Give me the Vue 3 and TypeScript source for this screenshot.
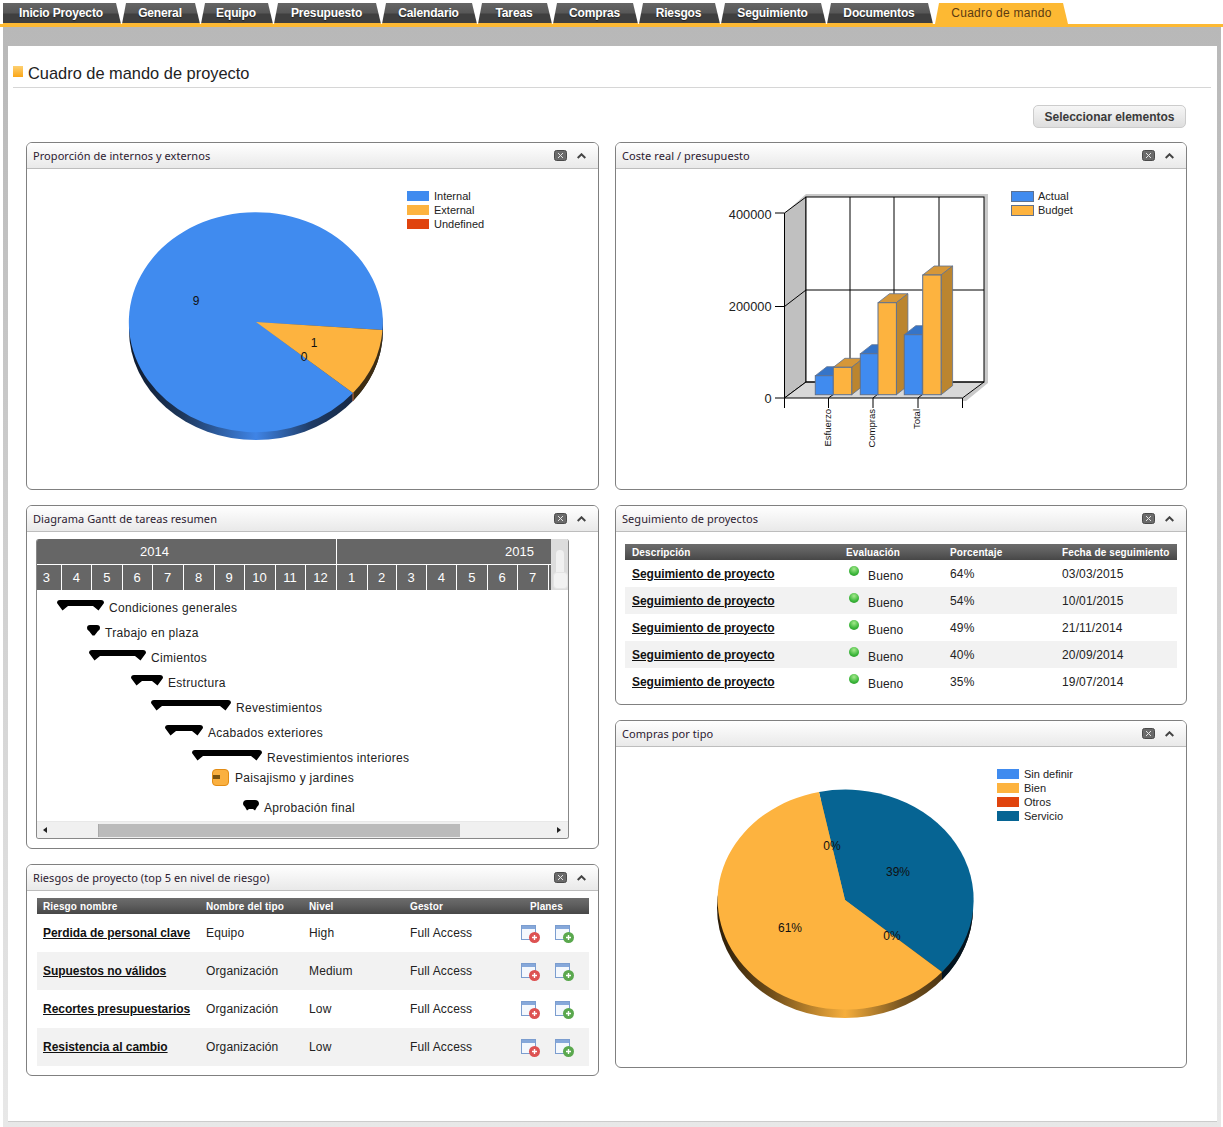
<template>
  <div class="page">
    <nav class="tabs">
      <a v-for="(tab, i) in tabs" :key="tab.label" class="tab" :class="{ first: i === 0, active: tab.label === 'Cuadro de mando' }" :style="{ width: tab.w + 'px' }">{{ tab.label }}</a>
    </nav>
    <div class="shell">
      <main class="content">
        <header class="heading">
          <span class="heading-mark"></span>
          <h1>Cuadro de mando de proyecto</h1>
        </header>
        <div class="actions">
          <button class="select-btn">Seleccionar elementos</button>
        </div>

        <div class="columns">
          <div class="column left">
            <section class="panel">
              <div class="panel-head">
                <span class="panel-title">Proporción de internos y externos</span>
                <svg class="icon-close" width="13" height="11" viewBox="0 0 13 11"><rect x=".5" y=".5" width="12" height="10" rx="2" fill="#6a6a6a" stroke="#4a4a4a" /><path d="M4 3l5 5M9 3l-5 5" stroke="#e4e4e4" fill="none" /></svg>
                <svg class="icon-chevron" width="9" height="6" viewBox="0 0 9 6"><path d="M.7 5L4.5 1.3 8.3 5" fill="none" stroke="#444" stroke-width="2" /></svg>
              </div>
              <svg class="chart" width="571" height="320" viewBox="27 169 571 320">
                <defs>
                  <linearGradient id="blueSide" x1="0" x2="1" y1="0" y2="0">
                    <stop offset="0" stop-color="#0e1a2e" />
                    <stop offset=".2" stop-color="#1c3558" />
                    <stop offset=".5" stop-color="#3f84e6" />
                    <stop offset=".72" stop-color="#1f3b64" />
                    <stop offset="1" stop-color="#0e1a2e" />
                  </linearGradient>
                </defs>
                <ellipse cx="256" cy="330" rx="127" ry="110" fill="url(#blueSide)" />
                <path d="M353 393A127 110 0 0 0 382.5 330V338A127 110 0 0 1 353 401Z" fill="#3e2d12" />
                <path d="M353 393V401" stroke="#c9704a" />
                <path d="M256 322L382.5 330A127 110 0 1 0 353 393Z" fill="#408bef" />
                <path d="M256 322L382.5 330A127 110 0 0 1 353 393Z" fill="#fdb33f" />
                <text x="196" y="305" class="chart-label">9</text>
                <text x="314" y="347" class="chart-label">1</text>
                <text x="304" y="361" class="chart-label">0</text>
                <g v-for="(item, i) in legendOne" :key="item.label">
                  <rect x="407" :y="191 + i * 14" width="22" height="10" :fill="item.color" />
                  <text x="434" :y="200 + i * 14" class="legend-text">{{ item.label }}</text>
                </g>
              </svg>
            </section>

            <section class="panel">
              <div class="panel-head">
                <span class="panel-title">Diagrama Gantt de tareas resumen</span>
                <svg class="icon-close" width="13" height="11" viewBox="0 0 13 11"><rect x=".5" y=".5" width="12" height="10" rx="2" fill="#6a6a6a" stroke="#4a4a4a" /><path d="M4 3l5 5M9 3l-5 5" stroke="#e4e4e4" fill="none" /></svg>
                <svg class="icon-chevron" width="9" height="6" viewBox="0 0 9 6"><path d="M.7 5L4.5 1.3 8.3 5" fill="none" stroke="#444" stroke-width="2" /></svg>
              </div>
              <div class="gantt-body">
                <div class="gantt">
                  <div class="gantt-head">
                    <div class="years">
                      <span class="year y2014">2014</span>
                      <span class="year y2015">2015</span>
                    </div>
                    <div class="months">
                      <span v-for="(m, i) in months" :key="i" class="month" :style="{ width: m.w + 'px' }">{{ m.n }}</span>
                    </div>
                  </div>
                  <div class="v-scroll">
                    <span class="v-track"></span>
                    <span class="v-thumb"></span>
                  </div>
                  <div class="gantt-canvas">
                    <div v-for="t in tasks" :key="t.label">
                      <svg v-if="t.kind !== 'task'" class="gantt-bar" :width="t.w" height="11" :viewBox="`0 0 ${t.w} 11`" :style="{ left: t.x - 37 + 'px', top: t.y - 590 + 'px' }">
                        <path :d="barPath(t.w, t.kind)" fill="#000" />
                      </svg>
                      <span v-else class="gantt-task" :style="{ left: t.x - 37 + 'px', top: t.y - 590 + 'px' }"><i></i></span>
                      <span class="gantt-label" :style="{ left: t.lx - 37 + 'px', top: t.ly - 590 + 'px' }">{{ t.label }}</span>
                    </div>
                  </div>
                  <div class="h-scroll">
                    <span class="h-arrow back"></span>
                    <div class="h-track"><span class="h-thumb"></span></div>
                    <span class="h-arrow next"></span>
                  </div>
                </div>
              </div>
            </section>

            <section class="panel">
              <div class="panel-head">
                <span class="panel-title">Riesgos de proyecto (top 5 en nivel de riesgo)</span>
                <svg class="icon-close" width="13" height="11" viewBox="0 0 13 11"><rect x=".5" y=".5" width="12" height="10" rx="2" fill="#6a6a6a" stroke="#4a4a4a" /><path d="M4 3l5 5M9 3l-5 5" stroke="#e4e4e4" fill="none" /></svg>
                <svg class="icon-chevron" width="9" height="6" viewBox="0 0 9 6"><path d="M.7 5L4.5 1.3 8.3 5" fill="none" stroke="#444" stroke-width="2" /></svg>
              </div>
              <div class="risk-body">
                <div class="risk-row table-head">
                  <span>Riesgo nombre</span>
                  <span>Nombre del tipo</span>
                  <span>Nivel</span>
                  <span>Gestor</span>
                  <span class="planes-head">Planes</span>
                </div>
                <div v-for="(r, i) in risks" :key="r.name" class="risk-row row" :class="{ alt: i % 2 === 1 }">
                  <a class="link">{{ r.name }}</a>
                  <span>{{ r.type }}</span>
                  <span>{{ r.level }}</span>
                  <span>Full Access</span>
                  <span class="plan-icons">
                    <svg v-for="c in planColors" :key="c" width="20" height="19" viewBox="0 0 20 19">
                      <rect x=".5" y=".5" width="14" height="14" fill="#f4f8fd" stroke="#7b9dcf" />
                      <rect x="1" y="1" width="13" height="3" fill="#86a8da" />
                      <circle cx="13.5" cy="12.5" r="5.5" :fill="c" />
                      <path d="M11 12.5h5M13.5 10v5" stroke="#fff" stroke-width="1.4" />
                    </svg>
                  </span>
                </div>
              </div>
            </section>
          </div>

          <div class="column right">
            <section class="panel">
              <div class="panel-head">
                <span class="panel-title">Coste real / presupuesto</span>
                <svg class="icon-close" width="13" height="11" viewBox="0 0 13 11"><rect x=".5" y=".5" width="12" height="10" rx="2" fill="#6a6a6a" stroke="#4a4a4a" /><path d="M4 3l5 5M9 3l-5 5" stroke="#e4e4e4" fill="none" /></svg>
                <svg class="icon-chevron" width="9" height="6" viewBox="0 0 9 6"><path d="M.7 5L4.5 1.3 8.3 5" fill="none" stroke="#444" stroke-width="2" /></svg>
              </div>
              <svg class="chart" width="570" height="320" viewBox="616 169 570 320">
                <path d="M786 212L806 194H988V383L966 401H963V398L984 382V197H806Z" fill="#c9c9c9" />
                <path d="M784.5 213L806 197V382L784.5 398Z" fill="#c0c0c0" stroke="#000" stroke-width="1" />
                <path d="M784.5 398L806 382H984L962.5 398Z" fill="#d8d8d8" />
                <rect x="806" y="197" width="178" height="185" fill="#fff" stroke="#000" />
                <path d="M850 197V382M894 197V382M939 197V382M806 290H984M784.5 306.5L806 290" stroke="#000" fill="none" />
                <path d="M784.5 398L806 382H984L962.5 398H784.5" stroke="#000" fill="none" />
                <path d="M775 213H784.5M775 306.5H784.5M775 398H784.5V408M828.5 398V408M828.5 398L834 394M873 398V408M873 398L878 394M918 398V408M918 398L923 394M962.5 398V408" stroke="#000" fill="none" />
                <g v-for="b in bars" :key="b.x">
                  <path :d="`M${b.x} ${b.top}l11.5 -9h${b.w}l-11.5 9Z`" :fill="b.topColor" stroke="#5d7190" stroke-width=".8" />
                  <path :d="`M${b.x + b.w} ${b.top}l11.5 -9V385.7l-11.5 9Z`" :fill="b.sideColor" stroke="#5d7190" stroke-width=".8" />
                  <rect :x="b.x" :y="b.top" :width="b.w" :height="394.7 - b.top" :fill="b.color" stroke="#5d7190" />
                </g>
                <text x="771.5" y="218.5" class="axis-text">400000</text>
                <text x="771.5" y="311" class="axis-text">200000</text>
                <text x="771.5" y="403" class="axis-text">0</text>
                <text transform="translate(831 409) rotate(-90)" class="cat-text">Esfuerzo</text>
                <text transform="translate(875 409) rotate(-90)" class="cat-text">Compras</text>
                <text transform="translate(920 409) rotate(-90)" class="cat-text">Total</text>
                <g v-for="(item, i) in legendTwo" :key="item.label">
                  <rect x="1011.5" :y="191.5 + i * 14" width="22" height="10" :fill="item.color" stroke="#5d7190" />
                  <text x="1038" :y="200 + i * 14" class="legend-text">{{ item.label }}</text>
                </g>
              </svg>
            </section>

            <section class="panel">
              <div class="panel-head">
                <span class="panel-title">Seguimiento de proyectos</span>
                <svg class="icon-close" width="13" height="11" viewBox="0 0 13 11"><rect x=".5" y=".5" width="12" height="10" rx="2" fill="#6a6a6a" stroke="#4a4a4a" /><path d="M4 3l5 5M9 3l-5 5" stroke="#e4e4e4" fill="none" /></svg>
                <svg class="icon-chevron" width="9" height="6" viewBox="0 0 9 6"><path d="M.7 5L4.5 1.3 8.3 5" fill="none" stroke="#444" stroke-width="2" /></svg>
              </div>
              <div class="track-body">
                <div class="track-row table-head">
                  <span>Descripción</span>
                  <span>Evaluación</span>
                  <span>Porcentaje</span>
                  <span>Fecha de seguimiento</span>
                </div>
                <div v-for="(t, i) in tracking" :key="t.date" class="track-row row" :class="{ alt: i % 2 === 1 }">
                  <a class="link">Seguimiento de proyecto</a>
                  <span class="evaluation"><i class="dot"></i><span class="eval-text">Bueno</span></span>
                  <span>{{ t.pct }}</span>
                  <span>{{ t.date }}</span>
                </div>
              </div>
            </section>

            <section class="panel">
              <div class="panel-head">
                <span class="panel-title">Compras por tipo</span>
                <svg class="icon-close" width="13" height="11" viewBox="0 0 13 11"><rect x=".5" y=".5" width="12" height="10" rx="2" fill="#6a6a6a" stroke="#4a4a4a" /><path d="M4 3l5 5M9 3l-5 5" stroke="#e4e4e4" fill="none" /></svg>
                <svg class="icon-chevron" width="9" height="6" viewBox="0 0 9 6"><path d="M.7 5L4.5 1.3 8.3 5" fill="none" stroke="#444" stroke-width="2" /></svg>
              </div>
              <svg class="chart" width="570" height="320" viewBox="616 747 570 320">
                <defs>
                  <linearGradient id="orangeSide" x1="0" x2="1" y1="0" y2="0">
                    <stop offset="0" stop-color="#2a1c08" />
                    <stop offset=".2" stop-color="#6b4a18" />
                    <stop offset=".5" stop-color="#f6ae3c" />
                    <stop offset=".72" stop-color="#7a5620" />
                    <stop offset="1" stop-color="#2a1c08" />
                  </linearGradient>
                </defs>
                <ellipse cx="845" cy="908" rx="128" ry="110" fill="url(#orangeSide)" />
                <path d="M942 972A128 110 0 0 0 973 900V908A128 110 0 0 1 942 980Z" fill="#04141f" />
                <path d="M845 900L819 792A128 110 0 0 1 942 972Z" fill="#066493" />
                <path d="M845 900L942 972A128 110 0 1 1 819 792Z" fill="#fdb33f" />
                <text x="832" y="850" class="chart-label">0%</text>
                <text x="898" y="876" class="chart-label">39%</text>
                <text x="790" y="932" class="chart-label">61%</text>
                <text x="892" y="940" class="chart-label">0%</text>
                <g v-for="(item, i) in legendThree" :key="item.label">
                  <rect x="997" :y="769 + i * 14" width="22" height="10" :fill="item.color" />
                  <text x="1024" :y="778 + i * 14" class="legend-text">{{ item.label }}</text>
                </g>
              </svg>
            </section>
          </div>
        </div>
      </main>
    </div>
  </div>
</template>

<script setup lang="ts">
const tabs = [
  { label: 'Inicio Proyecto', w: 118 },
  { label: 'General', w: 78 },
  { label: 'Equipo', w: 72 },
  { label: 'Presupuesto', w: 107 },
  { label: 'Calendario', w: 95 },
  { label: 'Tareas', w: 74 },
  { label: 'Compras', w: 85 },
  { label: 'Riesgos', w: 81 },
  { label: 'Seguimiento', w: 105 },
  { label: 'Documentos', w: 106 },
  { label: 'Cuadro de mando', w: 133 }
]

const legendOne = [
  { label: 'Internal', color: '#408bef' },
  { label: 'External', color: '#fdb33f' },
  { label: 'Undefined', color: '#e0440e' }
]
const legendTwo = [
  { label: 'Actual', color: '#408bef' },
  { label: 'Budget', color: '#fdb33f' }
]
const legendThree = [
  { label: 'Sin definir', color: '#408bef' },
  { label: 'Bien', color: '#fdb33f' },
  { label: 'Otros', color: '#e0440e' },
  { label: 'Servicio', color: '#066493' }
]

const blue = { color: '#408bef', topColor: '#3574c8', sideColor: '#2f66b0', w: 18 }
const orange = { color: '#fdb33f', topColor: '#d69738', sideColor: '#bb852f', w: 18.4 }
const bars = [
  { x: 815.3, top: 375.7, ...blue },
  { x: 833.3, top: 367.3, ...orange },
  { x: 860.3, top: 353.7, ...blue },
  { x: 878, top: 302.7, ...orange },
  { x: 904.3, top: 334.7, ...blue },
  { x: 922.7, top: 275, ...orange }
]

const months = [
  { n: 3, w: 24.5 }, { n: 4, w: 30.5 }, { n: 5, w: 30.5 }, { n: 6, w: 30 }, { n: 7, w: 31 }, { n: 8, w: 31 },
  { n: 9, w: 30 }, { n: 10, w: 31 }, { n: 11, w: 30 }, { n: 12, w: 31 }, { n: 1, w: 31 }, { n: 2, w: 29 },
  { n: 3, w: 30 }, { n: 4, w: 30.5 }, { n: 5, w: 30.5 }, { n: 6, w: 30 }, { n: 7, w: 31 }
]

const tasks = [
  { label: 'Condiciones generales', kind: 'summary', x: 57, w: 47, y: 600, lx: 109, ly: 601 },
  { label: 'Trabajo en plaza', kind: 'small', x: 87, w: 13, y: 625, lx: 105, ly: 626 },
  { label: 'Cimientos', kind: 'summary', x: 89, w: 57, y: 650, lx: 151, ly: 651 },
  { label: 'Estructura', kind: 'summary', x: 131, w: 32, y: 675, lx: 168, ly: 676 },
  { label: 'Revestimientos', kind: 'summary', x: 151, w: 80, y: 700, lx: 236, ly: 701 },
  { label: 'Acabados exteriores', kind: 'summary', x: 165, w: 38, y: 725, lx: 208, ly: 726 },
  { label: 'Revestimientos interiores', kind: 'summary', x: 192, w: 70, y: 750, lx: 267, ly: 751 },
  { label: 'Paisajismo y jardines', kind: 'task', x: 212, w: 17, y: 769, lx: 235, ly: 771 },
  { label: 'Aprobación final', kind: 'milestone', x: 243, w: 16, y: 800, lx: 264, ly: 801 }
]

function barPath(w: number, kind: string): string {
  if (kind === 'small') return `M3 0H${w - 3}Q${w} 0 ${w} 3Q${w} 5 ${w - 2} 6L${w / 2 + 1} 10.5H${w / 2 - 1}L2 6Q0 5 0 3Q0 0 3 0Z`
  if (kind === 'milestone') return `M4 0H${w - 4}Q${w} 0 ${w} 4Q${w} 5 ${w - 2} 7L${w - 4} 10.5L${w - 6} 9H6L4 10.5L2 7Q0 5 0 4Q0 0 4 0Z`
  return `M3 0H${w - 3}Q${w} 0 ${w} 3L${w - 5.5} 10.5L${w - 11} 6H11L5.5 10.5L0 3Q0 0 3 0Z`
}

const risks = [
  { name: 'Perdida de personal clave', type: 'Equipo', level: 'High' },
  { name: 'Supuestos no válidos', type: 'Organización', level: 'Medium' },
  { name: 'Recortes presupuestarios', type: 'Organización', level: 'Low' },
  { name: 'Resistencia al cambio', type: 'Organización', level: 'Low' }
]
const planColors = ['#dd5252', '#5aa84e']

const tracking = [
  { pct: '64%', date: '03/03/2015' },
  { pct: '54%', date: '10/01/2015' },
  { pct: '49%', date: '21/11/2014' },
  { pct: '40%', date: '20/09/2014' },
  { pct: '35%', date: '19/07/2014' }
]
</script>

<style>
html, body {
  margin: 0;
  background: #fff;
}
</style>

<style scoped>
.page {
  width: 1223px;
  height: 1127px;
  overflow: hidden;
  font-family: "Liberation Sans", Arial, sans-serif;
  font-size: 12px;
  color: #222;
}

.tabs {
  display: flex;
  gap: 1px;
  height: 21px;
  padding: 3px 0 0 3px;
  border-bottom: 3px solid #fdb933;
}
.tab {
  box-sizing: border-box;
  flex: none;
  height: 21px;
  line-height: 20px;
  padding-right: 2px;
  text-align: center;
  font-weight: bold;
  letter-spacing: -.14px;
  color: #fff;
  text-shadow: 0 1px 1px rgba(0, 0, 0, .5);
  background: linear-gradient(#666 0, #575757 48%, #3f3f3f 52%, #3f3f3f 95%, #fdb933 95%);
  clip-path: polygon(4px 0, calc(100% - 5px) 0, 100% 100%, 0 100%);
  white-space: nowrap;
}
.tab.first {
  clip-path: polygon(0 0, calc(100% - 5px) 0, 100% 100%, 0 100%);
}
.tab.active {
  font-weight: normal;
  letter-spacing: .3px;
  color: #5b3a12;
  text-shadow: none;
  background: #fdb933;
  padding: 0;
  margin-left: 1px;
}

.shell {
  margin-left: 3px;
  width: 1209px;
  padding: 19px 4px 5px 5px;
  background: linear-gradient(#b8b8b8, #e8e8e8);
}
.content {
  box-sizing: border-box;
  height: 1076px;
  background: #fff;
  border-bottom: 1px solid #ccc;
}

.heading {
  display: flex;
  align-items: center;
  height: 42px;
  margin: 0 6px 0 5px;
  padding-top: 13px;
  box-sizing: border-box;
  border-bottom: 1px solid #d6d6d6;
}
.heading-mark {
  width: 10px;
  height: 11px;
  margin: 0 5px 4px 0;
  background: linear-gradient(#fdd071, #fba617);
}
h1 {
  margin: 0;
  font-size: 16.4px;
  font-weight: normal;
  color: #222;
}

.actions {
  display: flex;
  justify-content: flex-end;
  margin: 17px 31px 14px 0;
}
.select-btn {
  width: 153px;
  height: 23px;
  padding: 0;
  font: bold 12px "Liberation Sans", Arial, sans-serif;
  color: #3a3a3a;
  background: linear-gradient(#f6f6f6, #dedede);
  border: 1px solid #ccc;
  border-radius: 5px;
}

.columns {
  display: flex;
  gap: 16px;
  padding-left: 18px;
}
.column {
  display: flex;
  flex-direction: column;
  gap: 15px;
}
.column.left {
  width: 573px;
}
.column.right {
  width: 572px;
}

.panel {
  border: 1px solid #808080;
  border-radius: 6px;
  overflow: hidden;
  background: #fff;
}
.panel-head {
  display: flex;
  align-items: center;
  height: 25px;
  padding: 0 12px 0 6px;
  background: linear-gradient(#fff, #e9e9e9);
  border-bottom: 1px solid #bdbdbd;
}
.panel-title {
  flex: 1;
  font-family: "Noto Sans", sans-serif;
  font-size: 11px;
  letter-spacing: .06px;
  color: #2c2030;
}
.icon-chevron {
  margin-left: 10px;
}
.chart {
  display: block;
}
.chart-label {
  font-size: 12px;
  text-anchor: middle;
  fill: #111;
}
.legend-text {
  font-size: 11px;
  fill: #222;
}
.axis-text {
  font-size: 12.8px;
  text-anchor: end;
  fill: #222;
}
.cat-text {
  font-size: 9.5px;
  text-anchor: end;
  fill: #111;
}

.gantt-body {
  padding: 7px 29px 9px 9px;
}
.gantt {
  position: relative;
  display: flex;
  flex-direction: column;
  height: 299px;
  border: solid #888;
  border-width: 0 1px 1px;
  border-radius: 3px;
  overflow: hidden;
}
.gantt-head {
  width: 514px;
  height: 51px;
  color: #fff;
  font-size: 13px;
  background: #666;
}
.years {
  display: flex;
  height: 25px;
  line-height: 25px;
  border-bottom: 1px solid #fff;
}
.year {
  box-sizing: border-box;
}
.y2014 {
  width: 300px;
  padding-left: 103px;
  border-right: 1px solid #fff;
}
.y2015 {
  padding-left: 168px;
}
.months {
  display: flex;
  height: 25px;
  line-height: 25px;
}
.month {
  box-sizing: border-box;
  text-align: center;
  border-right: 1px solid #fff;
  flex: none;
}
.month:first-child {
  padding-right: 5px;
}
.v-scroll {
  position: absolute;
  right: 0;
  top: 0;
  width: 17px;
  height: 51px;
  background: #dcdcdc;
}
.v-track {
  position: absolute;
  left: 5px;
  top: 11px;
  width: 8px;
  height: 24px;
  background: #f0f0f0;
  border-radius: 4px 4px 0 0;
}
.v-thumb {
  position: absolute;
  left: 2px;
  top: 33px;
  width: 13px;
  height: 15px;
  background: #f2f2f2;
  border: 1px solid #e4e4e4;
  border-radius: 4px;
  box-sizing: content-box;
}
.gantt-canvas {
  position: relative;
  flex: 1;
}
.gantt-bar {
  position: absolute;
  display: block;
}
.gantt-task {
  position: absolute;
  box-sizing: border-box;
  width: 17px;
  height: 17px;
  background: #fab040;
  border: 1px solid #e28c14;
  border-radius: 4px;
}
.gantt-task i {
  position: absolute;
  left: 0;
  top: 5px;
  width: 7px;
  height: 4px;
  background: #7c5410;
}
.gantt-label {
  position: absolute;
  white-space: nowrap;
  letter-spacing: .3px;
  line-height: 14px;
  color: #222;
}
.h-scroll {
  display: flex;
  align-items: center;
  height: 17px;
  background: #f0f0f0;
  border-top: 1px solid #e8e8e8;
  box-sizing: border-box;
}
.h-arrow {
  width: 0;
  height: 0;
  border: solid transparent;
  border-width: 3.5px 4px;
}
.h-arrow.back {
  margin: 0 7px 0 6px;
  border-left-width: 0;
  border-right-color: #222;
}
.h-arrow.next {
  margin: 0 7px 0 7px;
  border-right-width: 0;
  border-left-color: #222;
}
.h-track {
  flex: 1;
  padding-left: 44px;
}
.h-thumb {
  display: block;
  width: 362px;
  height: 13px;
  background: #bbb;
  border: solid #aaa;
  border-width: 0 0 0 1px;
  box-sizing: border-box;
}

.table-head {
  align-items: center;
  font-size: 10px;
  font-weight: bold;
  letter-spacing: .12px;
  color: #fff;
  background: linear-gradient(#6c6c6c, #5e5e5e 45%, #474747);
  height: 16px;
}
.row span {
  letter-spacing: .14px;
}
.row {
  align-items: center;
  color: #222;
}
.row.alt {
  background: #f2f2f2;
}
.link {
  font-weight: bold;
  color: #111;
  text-decoration: underline;
  letter-spacing: -.04px;
}

.risk-body {
  padding: 7px 9px 9px 10px;
}
.risk-row {
  display: grid;
  grid-template-columns: 163px 103px 101px 111px 1fr;
  padding-left: 6px;
}
.risk-row.row {
  height: 38px;
}
.planes-head {
  padding-left: 9px;
}
.plan-icons {
  display: flex;
  gap: 14px;
  margin-top: 2px;
}

.track-body {
  padding: 12px 9px 9px;
}
.track-row {
  display: grid;
  grid-template-columns: 214px 104px 112px 1fr;
  padding-left: 7px;
}
.track-row.row {
  height: 27px;
}
.evaluation {
  display: flex;
  align-items: center;
  gap: 9px;
  padding-left: 3px;
}
.dot {
  width: 10px;
  height: 10px;
  margin-bottom: 6px;
  border-radius: 50%;
  background: radial-gradient(circle at 50% 30%, #a4ea8c, #3bb53a 60%, #249024);
}
.eval-text {
  margin-top: 4px;
}
</style>
